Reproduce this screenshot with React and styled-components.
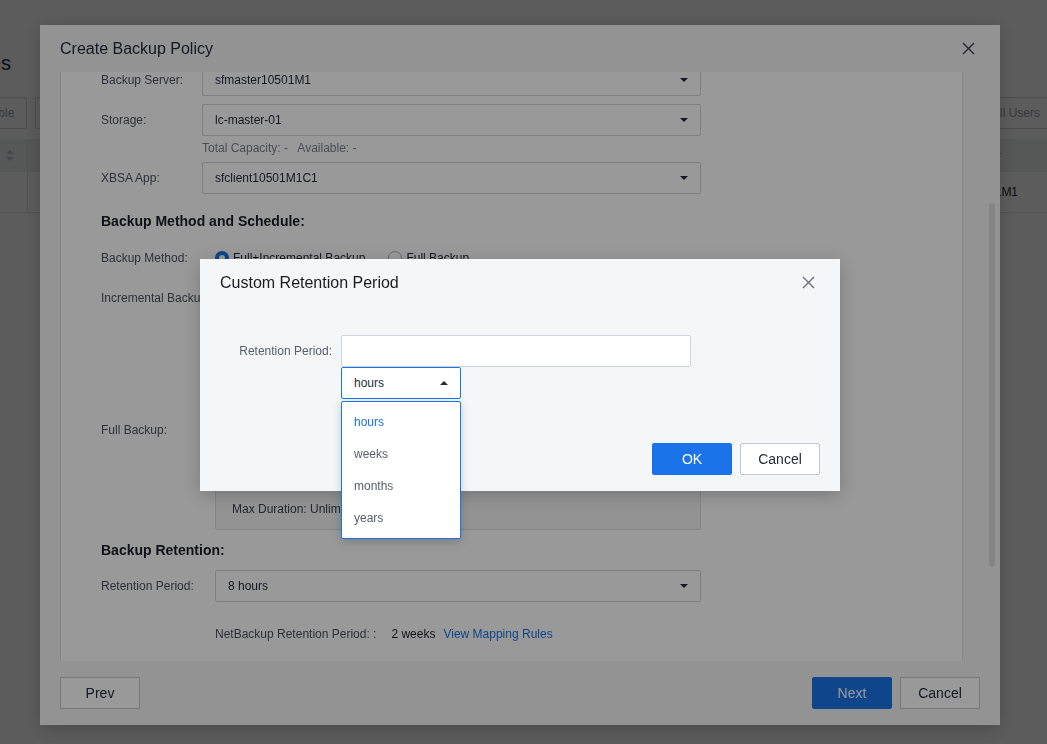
import React from 'react';
import styled, { createGlobalStyle } from 'styled-components';

const GlobalStyle = createGlobalStyle`
  html, body { margin: 0; padding: 0; background: #fff; overflow: hidden; }
  body {
    font-family: "Liberation Sans", Arial, sans-serif;
    font-size: 12px;
    color: #252b3a;
  }
  * { box-sizing: border-box; }
`;

const BLUE = '#1a73e8';

/* ---------- underlying list page ---------- */

const Page = styled.div`
  width: 1203px;
  height: 744px;
  margin-left: -150px;
  background: #fff;
`;

const PageHeader = styled.div`
  display: flex;
  justify-content: flex-end;
  width: 161px;
  padding-top: 49px;
`;

const PageTitle = styled.h1`
  margin: 0;
  white-space: nowrap;
  font-size: 20px;
  font-weight: 400;
  line-height: 28px;
  color: #252b3a;
`;

const Toolbar = styled.div`
  display: flex;
  justify-content: space-between;
  margin-top: 20px;
  padding-left: 114px;
`;

const ToolGroup = styled.div`
  display: flex;
  gap: 8px;
`;

const ToolButton = styled.button`
  height: 32px;
  padding: 0 12px;
  border: 1px solid #d4d6db;
  border-radius: 2px;
  background: #fff;
  font: inherit;
  font-size: 12px;
  color: ${p => (p.$muted ? '#9a9da5' : '#252b3a')};
`;

const Table = styled.div`
  margin-top: 10px;
  display: grid;
  grid-template-columns: 178px 882px 1fr;
`;

const HeadCell = styled.div`
  height: 33px;
  background: #eff0f2;
  border-right: 1px solid #e3e5e9;
  display: flex;
  align-items: center;
  justify-content: ${p => (p.$end ? 'flex-end' : 'flex-start')};
  padding: 0 13px 0 12px;
  color: #575d6c;
`;

const BodyCell = styled.div`
  height: 41px;
  border-right: 1px solid #e3e5e9;
  border-bottom: 1px solid #e3e5e9;
  display: flex;
  align-items: center;
  padding: 0 12px;
  color: #252b3a;
`;

const SortIcon = () => (
  <svg width="8" height="11" viewBox="0 0 8 11">
    <path d="M4 0 L8 4 H0 Z" fill="#c2c5cc" />
    <path d="M4 11 L8 7 H0 Z" fill="#c2c5cc" />
  </svg>
);

/* ---------- overlays ---------- */

const Mask = styled.div`
  position: fixed;
  inset: 0;
  background: rgba(0, 0, 0, 0.4);
`;

const CloseButton = styled.button`
  border: 0;
  padding: 0;
  background: none;
  display: flex;
  cursor: pointer;
`;

const CloseIcon = ({ color }) => (
  <svg width="13" height="13" viewBox="0 0 13 13">
    <path d="M1 1 L12 12 M12 1 L1 12" stroke={color} strokeWidth="1.4" fill="none" />
  </svg>
);

/* ---------- Create Backup Policy dialog ---------- */

const Dialog = styled.div`
  position: fixed;
  left: 40px;
  top: 25px;
  width: 960px;
  height: 700px;
  background: #f5f5f5;
  display: flex;
  flex-direction: column;
  box-shadow: 0 4px 20px rgba(0, 0, 0, 0.2);
`;

const DialogHeader = styled.div`
  height: 47px;
  flex-shrink: 0;
  display: flex;
  align-items: center;
  justify-content: space-between;
  padding: 0 25px 0 20px;
`;

const DialogTitle = styled.h2`
  margin: 0;
  font-size: 16px;
  font-weight: 400;
  color: #252b3a;
`;

const DialogBody = styled.div`
  flex: 1;
  min-height: 0;
  position: relative;
  display: flex;
  padding: 0 37px 0 20px;
`;

const ScrollThumb = styled.div`
  position: absolute;
  right: 5px;
  top: 131px;
  width: 6px;
  height: 364px;
  border-radius: 3px;
  background: #dedede;
`;

const Panel = styled.div`
  flex: 1;
  background: #fff;
  border-left: 1px solid #dcdee3;
  border-right: 1px solid #dcdee3;
  overflow: hidden;
`;

const PanelContent = styled.div`
  margin-top: -8px;
  padding: 0 40px;
`;

const Row = styled.div`
  display: flex;
  align-items: ${p => (p.$top ? 'flex-start' : 'center')};
  margin-top: ${p => p.$mt || 0}px;
  min-height: 20px;
`;

const Label = styled.div`
  width: ${p => p.$w}px;
  flex-shrink: 0;
  white-space: nowrap;
  line-height: 16px;
  color: #4d525e;
`;

const SelectBox = styled.div`
  width: ${p => p.$w}px;
  height: 32px;
  border: 1px solid #d4d6db;
  border-radius: 2px;
  background: #fff;
  display: flex;
  align-items: center;
  justify-content: space-between;
  padding: 0 12px;
  color: #252b3a;
`;

const Caret = styled.span`
  width: 0;
  height: 0;
  border-left: 4px solid transparent;
  border-right: 4px solid transparent;
  ${p => (p.$up ? 'border-bottom' : 'border-top')}: 4px solid #252b3a;
`;

const Hint = styled.div`
  margin-top: 4px;
  padding-left: 101px;
  line-height: 16px;
  color: #7d818b;
`;

const SectionTitle = styled.h3`
  margin: ${p => p.$mt}px 0 0;
  font-size: 14px;
  font-weight: 700;
  line-height: 20px;
  color: #191c24;
`;

const RadioGroup = styled.div`
  display: flex;
  gap: 23px;
`;

const RadioOption = styled.label`
  display: flex;
  align-items: center;
  gap: 4px;
  color: #252b3a;
`;

const Radio = styled.span`
  width: 14px;
  height: 14px;
  border-radius: 50%;
  background: #fff;
  border: ${p => (p.$checked ? `4px solid ${BLUE}` : '1px solid #adb0b8')};
`;

const ScheduleBox = styled.div`
  width: 486px;
  border: 1px solid #dcdee3;
  border-radius: 2px;
  background: #f5f5f6;
  padding: 6px 16px 4px;
`;

const ScheduleLine = styled.div`
  line-height: 32px;
  color: #3d414c;
`;

const InfoLine = styled.div`
  margin-top: 24px;
  padding-left: 114px;
  line-height: 16px;
  display: flex;
  align-items: center;
  color: #4d525e;
`;

const InfoValue = styled.span`
  margin-left: 15px;
  color: #191c24;
`;

const Link = styled.a`
  margin-left: 8px;
  color: ${BLUE};
  text-decoration: none;
`;

const DialogFooter = styled.div`
  height: 64px;
  flex-shrink: 0;
  display: flex;
  align-items: center;
  justify-content: space-between;
  padding: 0 20px;
`;

const ButtonGroup = styled.div`
  display: flex;
  gap: 8px;
`;

const Button = styled.button`
  width: 80px;
  height: 32px;
  border-radius: 2px;
  font-family: inherit;
  font-size: 14px;
  cursor: pointer;
  border: 1px solid ${p => (p.$primary ? BLUE : '#c5c8ce')};
  background: ${p => (p.$primary ? BLUE : '#fff')};
  color: ${p => (p.$primary ? '#fff' : '#252b3a')};
`;

/* ---------- Custom Retention Period modal ---------- */

const Modal = styled.div`
  position: fixed;
  left: 200px;
  top: 259px;
  width: 640px;
  background: #f5f6f8;
  box-shadow: 0 4px 16px rgba(0, 0, 0, 0.2);
`;

const ModalHeader = styled.div`
  height: 46px;
  display: flex;
  align-items: center;
  justify-content: space-between;
  padding: 1px 25px 0 20px;
`;

const ModalTitle = styled.h2`
  margin: 0;
  font-size: 16px;
  font-weight: 400;
  color: #191c24;
`;

const ModalBody = styled.div`
  display: flex;
  padding: 30px 20px 0;
`;

const FieldLabel = styled.div`
  width: 112px;
  margin-right: 9px;
  text-align: right;
  line-height: 32px;
  color: #575d6c;
`;

const Controls = styled.div`
  position: relative;
  display: flex;
  flex-direction: column;
`;

const TextInput = styled.input`
  width: 350px;
  height: 32px;
  border: 1px solid #d0d3d9;
  border-radius: 2px;
  background: #fff;
  padding: 0 12px;
  font: inherit;
  outline: none;
`;

const UnitSelect = styled(SelectBox)`
  border-color: ${BLUE};
`;

const Menu = styled.ul`
  position: absolute;
  top: 66px;
  left: 0;
  width: 120px;
  margin: 0;
  padding: 4px 0;
  list-style: none;
  background: #fff;
  border: 1px solid ${BLUE};
  border-radius: 2px;
  box-shadow: 0 3px 10px rgba(0, 0, 0, 0.18);
`;

const MenuItem = styled.li`
  height: 32px;
  line-height: 32px;
  padding-left: 12px;
  color: ${p => (p.$active ? BLUE : '#575d6c')};
`;

const ModalFooter = styled.div`
  display: flex;
  justify-content: flex-end;
  gap: 8px;
  margin-top: 44px;
  padding: 0 20px 16px;
`;

const units = ['hours', 'weeks', 'months', 'years'];

export default function App() {
  return (
    <>
      <GlobalStyle />
      <Page>
        <PageHeader>
          <PageTitle>Backup Policies</PageTitle>
        </PageHeader>
        <Toolbar>
          <ToolGroup>
            <ToolButton $muted>Enable</ToolButton>
            <ToolButton $muted>Disable</ToolButton>
          </ToolGroup>
          <ToolButton $muted>All Users</ToolButton>
        </Toolbar>
        <Table>
          <HeadCell $end><SortIcon /></HeadCell>
          <HeadCell>Policy Name</HeadCell>
          <HeadCell>Backup Server</HeadCell>
          <BodyCell />
          <BodyCell>policy-01</BodyCell>
          <BodyCell>sfmaster10501M1</BodyCell>
        </Table>
      </Page>

      <Mask />

      <Dialog>
        <DialogHeader>
          <DialogTitle>Create Backup Policy</DialogTitle>
          <CloseButton aria-label="Close"><CloseIcon color="#3d414c" /></CloseButton>
        </DialogHeader>
        <DialogBody>
          <Panel>
            <PanelContent>
              <Row>
                <Label $w={101}>Backup Server:</Label>
                <SelectBox $w={499}>sfmaster10501M1<Caret /></SelectBox>
              </Row>
              <Row $mt={8}>
                <Label $w={101}>Storage:</Label>
                <SelectBox $w={499}>lc-master-01<Caret /></SelectBox>
              </Row>
              <Hint>Total Capacity: -&nbsp;&nbsp; Available: -</Hint>
              <Row $mt={6}>
                <Label $w={101}>XBSA App:</Label>
                <SelectBox $w={499}>sfclient10501M1C1<Caret /></SelectBox>
              </Row>

              <SectionTitle $mt={17}>Backup Method and Schedule:</SectionTitle>
              <Row $mt={17}>
                <Label $w={114}>Backup Method:</Label>
                <RadioGroup>
                  <RadioOption><Radio $checked />Full+Incremental Backup</RadioOption>
                  <RadioOption><Radio />Full Backup</RadioOption>
                </RadioGroup>
              </Row>
              <Row $top $mt={22}>
                <Label $w={114}>Incremental Backup:</Label>
                <ScheduleBox>
                  <ScheduleLine>Schedule: Every day</ScheduleLine>
                  <ScheduleLine>Start Time: 00:00</ScheduleLine>
                  <ScheduleLine>Max Duration: Unlimited</ScheduleLine>
                </ScheduleBox>
              </Row>
              <Row $top $mt={24}>
                <Label $w={114}>Full Backup:</Label>
                <ScheduleBox>
                  <ScheduleLine>Schedule: Every Sunday</ScheduleLine>
                  <ScheduleLine>Start Time: 00:00</ScheduleLine>
                  <ScheduleLine>Max Duration: Unlimited</ScheduleLine>
                </ScheduleBox>
              </Row>

              <SectionTitle $mt={10}>Backup Retention:</SectionTitle>
              <Row $mt={10}>
                <Label $w={114}>Retention Period:</Label>
                <SelectBox $w={486}>8 hours<Caret /></SelectBox>
              </Row>
              <InfoLine>
                NetBackup Retention Period: :
                <InfoValue>2 weeks</InfoValue>
                <Link href="#">View Mapping Rules</Link>
              </InfoLine>
            </PanelContent>
          </Panel>
          <ScrollThumb />
        </DialogBody>
        <DialogFooter>
          <Button>Prev</Button>
          <ButtonGroup>
            <Button $primary>Next</Button>
            <Button>Cancel</Button>
          </ButtonGroup>
        </DialogFooter>
      </Dialog>

      <Mask />

      <Modal>
        <ModalHeader>
          <ModalTitle>Custom Retention Period</ModalTitle>
          <CloseButton aria-label="Close"><CloseIcon color="#6b707c" /></CloseButton>
        </ModalHeader>
        <ModalBody>
          <FieldLabel>Retention Period:</FieldLabel>
          <Controls>
            <TextInput />
            <UnitSelect $w={120}>hours<Caret $up /></UnitSelect>
            <Menu>
              {units.map(u => (
                <MenuItem key={u} $active={u === 'hours'}>{u}</MenuItem>
              ))}
            </Menu>
          </Controls>
        </ModalBody>
        <ModalFooter>
          <Button $primary>OK</Button>
          <Button>Cancel</Button>
        </ModalFooter>
      </Modal>
    </>
  );
}
